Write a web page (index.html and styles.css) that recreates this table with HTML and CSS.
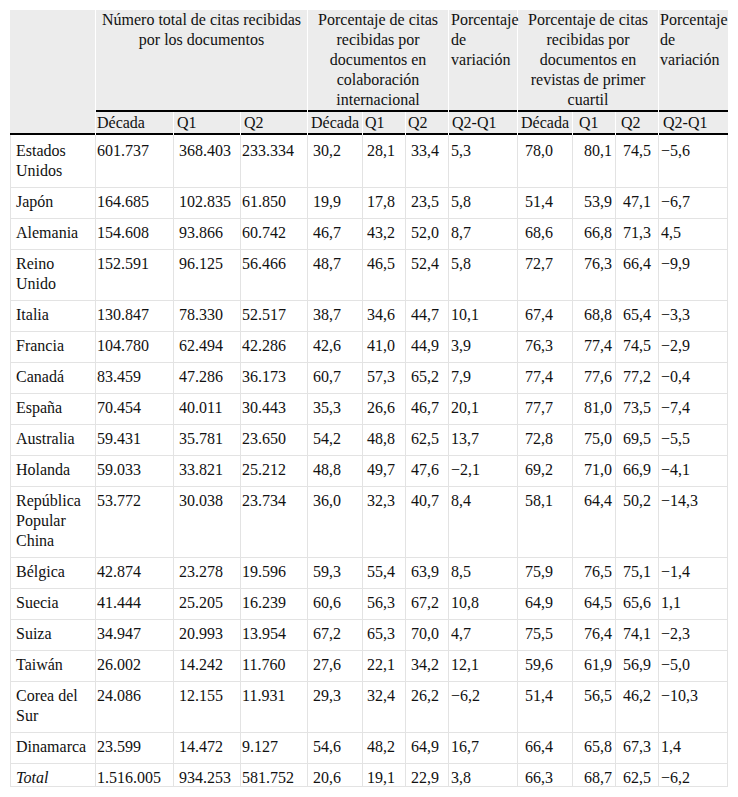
FILE: index.html
```html
<!DOCTYPE html>
<html lang="es">
<head>
<meta charset="utf-8">
<title>Citas recibidas</title>
<link rel="stylesheet" href="styles.css">
</head>
<body>
<div class="frame">
<table class="data">
  <colgroup>
    <col class="c-name"><col class="c-dec1"><col class="c-q"><col class="c-q"><col class="c-dec2"><col class="c-s"><col class="c-s"><col class="c-var"><col class="c-dec2"><col class="c-s"><col class="c-s"><col class="c-var2">
  </colgroup>
  <thead>
    <tr class="h1">
      <th class="blank"></th>
      <th colspan="3" class="center">Número total de citas recibidas por los documentos</th>
      <th colspan="3" class="center">Porcentaje de citas recibidas por documentos en colaboración internacional</th>
      <th class="var">Porcentaje de variación</th>
      <th colspan="3" class="center">Porcentaje de citas recibidas por documentos en revistas de primer cuartil</th>
      <th class="var2">Porcentaje de variación</th>
    </tr>
    <tr class="h2">
      <th></th>
      <th>Década</th><th>Q1</th><th>Q2</th>
      <th>Década</th><th>Q1</th><th>Q2</th>
      <th>Q2-Q1</th>
      <th>Década</th><th>Q1</th><th>Q2</th>
      <th>Q2-Q1</th>
    </tr>
  </thead>
  <tbody>
    <tr><td>Estados Unidos</td><td>601.737</td><td>368.403</td><td>233.334</td><td>30,2</td><td>28,1</td><td>33,4</td><td>5,3</td><td>78,0</td><td>80,1</td><td>74,5</td><td>−5,6</td></tr>
    <tr><td>Japón</td><td>164.685</td><td>102.835</td><td>61.850</td><td>19,9</td><td>17,8</td><td>23,5</td><td>5,8</td><td>51,4</td><td>53,9</td><td>47,1</td><td>−6,7</td></tr>
    <tr><td>Alemania</td><td>154.608</td><td>93.866</td><td>60.742</td><td>46,7</td><td>43,2</td><td>52,0</td><td>8,7</td><td>68,6</td><td>66,8</td><td>71,3</td><td>4,5</td></tr>
    <tr><td>Reino Unido</td><td>152.591</td><td>96.125</td><td>56.466</td><td>48,7</td><td>46,5</td><td>52,4</td><td>5,8</td><td>72,7</td><td>76,3</td><td>66,4</td><td>−9,9</td></tr>
    <tr><td>Italia</td><td>130.847</td><td>78.330</td><td>52.517</td><td>38,7</td><td>34,6</td><td>44,7</td><td>10,1</td><td>67,4</td><td>68,8</td><td>65,4</td><td>−3,3</td></tr>
    <tr><td>Francia</td><td>104.780</td><td>62.494</td><td>42.286</td><td>42,6</td><td>41,0</td><td>44,9</td><td>3,9</td><td>76,3</td><td>77,4</td><td>74,5</td><td>−2,9</td></tr>
    <tr><td>Canadá</td><td>83.459</td><td>47.286</td><td>36.173</td><td>60,7</td><td>57,3</td><td>65,2</td><td>7,9</td><td>77,4</td><td>77,6</td><td>77,2</td><td>−0,4</td></tr>
    <tr><td>España</td><td>70.454</td><td>40.011</td><td>30.443</td><td>35,3</td><td>26,6</td><td>46,7</td><td>20,1</td><td>77,7</td><td>81,0</td><td>73,5</td><td>−7,4</td></tr>
    <tr><td>Australia</td><td>59.431</td><td>35.781</td><td>23.650</td><td>54,2</td><td>48,8</td><td>62,5</td><td>13,7</td><td>72,8</td><td>75,0</td><td>69,5</td><td>−5,5</td></tr>
    <tr><td>Holanda</td><td>59.033</td><td>33.821</td><td>25.212</td><td>48,8</td><td>49,7</td><td>47,6</td><td>−2,1</td><td>69,2</td><td>71,0</td><td>66,9</td><td>−4,1</td></tr>
    <tr><td>República Popular China</td><td>53.772</td><td>30.038</td><td>23.734</td><td>36,0</td><td>32,3</td><td>40,7</td><td>8,4</td><td>58,1</td><td>64,4</td><td>50,2</td><td>−14,3</td></tr>
    <tr><td>Bélgica</td><td>42.874</td><td>23.278</td><td>19.596</td><td>59,3</td><td>55,4</td><td>63,9</td><td>8,5</td><td>75,9</td><td>76,5</td><td>75,1</td><td>−1,4</td></tr>
    <tr><td>Suecia</td><td>41.444</td><td>25.205</td><td>16.239</td><td>60,6</td><td>56,3</td><td>67,2</td><td>10,8</td><td>64,9</td><td>64,5</td><td>65,6</td><td>1,1</td></tr>
    <tr><td>Suiza</td><td>34.947</td><td>20.993</td><td>13.954</td><td>67,2</td><td>65,3</td><td>70,0</td><td>4,7</td><td>75,5</td><td>76,4</td><td>74,1</td><td>−2,3</td></tr>
    <tr><td>Taiwán</td><td>26.002</td><td>14.242</td><td>11.760</td><td>27,6</td><td>22,1</td><td>34,2</td><td>12,1</td><td>59,6</td><td>61,9</td><td>56,9</td><td>−5,0</td></tr>
    <tr><td>Corea del Sur</td><td>24.086</td><td>12.155</td><td>11.931</td><td>29,3</td><td>32,4</td><td>26,2</td><td>−6,2</td><td>51,4</td><td>56,5</td><td>46,2</td><td>−10,3</td></tr>
    <tr><td>Dinamarca</td><td>23.599</td><td>14.472</td><td>9.127</td><td>54,6</td><td>48,2</td><td>64,9</td><td>16,7</td><td>66,4</td><td>65,8</td><td>67,3</td><td>1,4</td></tr>
    <tr><td class="it">Total</td><td>1.516.005</td><td>934.253</td><td>581.752</td><td>20,6</td><td>19,1</td><td>22,9</td><td>3,8</td><td>66,3</td><td>68,7</td><td>62,5</td><td>−6,2</td></tr>
  </tbody>
</table>
</div>
</body>
</html>
```

FILE: styles.css
```css
html, body {
  margin: 0;
  padding: 0;
  background: #fff;
}
body {
  padding: 10px;
  font-family: "Liberation Serif", serif;
  font-size: 16px;
  line-height: 20px;
  color: #111;
}
.frame {
  width: 718px;
  height: 776px;
  overflow: hidden;
  border-bottom: 1px solid #e3e3e3;
}
.data {
  table-layout: fixed;
  width: 718px;
  border-collapse: separate;
  border-spacing: 0;
}
.c-name { width: 85px; }
.c-dec1 { width: 78px; }
.c-q { width: 67px; }
.c-dec2 { width: 55px; }
.c-s { width: 43px; }
.c-var { width: 69px; }
.c-var2 { width: 70px; }

/* header */
.data th {
  font-weight: normal;
  text-align: left;
  vertical-align: top;
  border-left: 1px solid #fff;
  background: linear-gradient(#000, #000) left bottom / 100% 2px no-repeat, #ececec;
}
.data th:first-child {
  border-left: 0;
}
.data .h1 th {
  padding: 0 0 2px 2px;
}
.data .h1 th.blank {
  background: #ececec;
}
.data .h1 th.center {
  text-align: center;
  padding-left: 0;
}
.data .h1 th.var { padding-left: 2px; }
.data .h1 th.var2 { padding-left: 1px; }

.data .h2 th {
  padding: 1px 0 2px 2px;
}
.data .h2 th:nth-child(2) { padding-left: 1px; }
.data .h2 th:nth-child(3),
.data .h2 th:nth-child(4),
.data .h2 th:nth-child(5),
.data .h2 th:nth-child(8),
.data .h2 th:nth-child(9) { padding-left: 3px; }
.data .h2 th:nth-child(10) { padding-left: 6px; }
.data .h2 th:nth-child(11) { padding-left: 5px; }
.data .h2 th:nth-child(12) { padding-left: 4px; }

/* body */
.data td {
  vertical-align: top;
  padding: 4px 0 6px 3px;
  border-left: 1px solid #e3e3e3;
  border-bottom: 1px solid #e3e3e3;
}
.data tbody tr:first-child td {
  padding-top: 6px;
}
.data td:last-child {
  border-right: 1px solid #e3e3e3;
}
.data td:nth-child(1) { padding-left: 5px; }
.data td:nth-child(2) { padding-left: 1px; }
.data td:nth-child(3) { padding-left: 5px; }
.data td:nth-child(4) { padding-left: 1px; }
.data td:nth-child(5) { padding-left: 5px; }
.data td:nth-child(6) { padding-left: 4px; }
.data td:nth-child(7) { padding-left: 5px; }
.data td:nth-child(8) { padding-left: 2px; }
.data td:nth-child(9) { padding-left: 7px; }
.data td:nth-child(10) { padding-left: 11px; }
.data td:nth-child(11) { padding-left: 7px; }
.data td:nth-child(12) { padding-left: 2px; }
.data .it {
  font-style: italic;
}
```
